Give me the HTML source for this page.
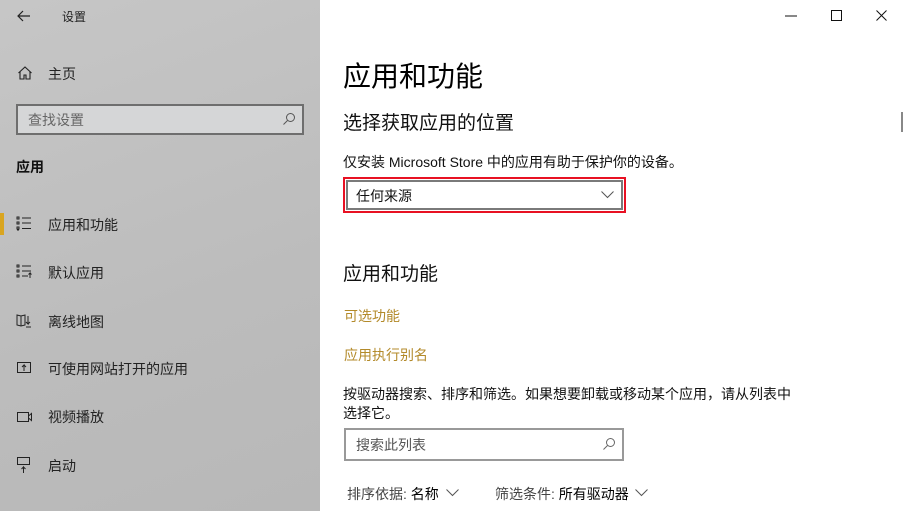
<!DOCTYPE html>
<html><head><meta charset="utf-8"><style>
*{margin:0;padding:0;box-sizing:border-box}
body{width:905px;height:511px;overflow:hidden;font-family:"Liberation Sans","Noto Sans CJK SC",sans-serif;background:#fff;position:relative;color:#000}
.side{position:absolute;left:0;top:0;width:320px;height:511px;background:linear-gradient(160deg,#c6c6c6,#bcbcbc 60%,#b8b8b8)}
.t{position:absolute;white-space:nowrap}
svg{position:absolute}
</style></head><body>
<div class="side">
<svg style="left:16px;top:9px" width="16" height="14" viewBox="0 0 16 14"><path d="M7 2L2 7l5 5M2 7h12" stroke="#222" stroke-width="1.2" fill="none"/></svg>
<div class="t" style="left:62px;top:8px;font-size:12px;color:#222">设置</div>
<svg style="left:17px;top:65px" width="16" height="16" viewBox="0 0 16 16"><path d="M1.5 8L8 2l6.5 6M3 6.5V14h4V10h2v4h4V6.5" stroke="#222" stroke-width="1.1" fill="none"/></svg>
<div class="t" style="left:48px;top:64px;font-size:14px;color:#222">主页</div>
<div style="position:absolute;left:16px;top:104px;width:288px;height:31px;border:2px solid #6e6e6e;background:#d5d6d7"></div>
<div class="t" style="left:28px;top:110px;font-size:14px;color:#666">查找设置</div>
<svg style="left:282px;top:112px" width="14" height="14" viewBox="0 0 14 14"><circle cx="8.5" cy="5.5" r="4" stroke="#555" fill="none"/><path d="M5.5 8.5L1.5 12.5" stroke="#555"/></svg>
<div class="t" style="left:16px;top:157px;font-size:14px;font-weight:bold;color:#111">应用</div>
<div style="position:absolute;left:0;top:213px;width:4px;height:22px;background:#d9a520"></div>
<svg style="left:16px;top:216px" width="18" height="16" viewBox="0 0 18 16"><path d="M1 1h2v2H1zM1 6h2v2H1zM1 11h2v2H1zM1 14h2" stroke="#222" fill="none" stroke-width="1"/><path d="M6 2h9M6 7h9M6 12.5h9" stroke="#222"/></svg>
<div class="t" style="left:48px;top:215px;font-size:14px;color:#222">应用和功能</div>
<svg style="left:16px;top:264px" width="18" height="16" viewBox="0 0 18 16"><path d="M1 1h2v2H1zM1 6h2v2H1zM1 11h2v2H1z" stroke="#222" fill="none"/><path d="M6 2h9M6 7h9M6 12h6M14 14V9l-1.5 1.5M14 9l1.5 1.5" stroke="#222" fill="none"/></svg>
<div class="t" style="left:48px;top:263px;font-size:14px;color:#222">默认应用</div>
<svg style="left:16px;top:313px" width="18" height="16" viewBox="0 0 18 16"><path d="M1 2l4 1 4-1v10l-4 1-4-1zM5 3v10M12 3v8l-2-2M12 11l2-2M10 14h5" stroke="#222" fill="none"/></svg>
<div class="t" style="left:48px;top:312px;font-size:14px;color:#222">离线地图</div>
<svg style="left:16px;top:360px" width="18" height="16" viewBox="0 0 18 16"><path d="M1.5 2.5h13v10h-13zM8 11V5l-2 2M8 5l2 2" stroke="#222" fill="none"/></svg>
<div class="t" style="left:48px;top:359px;font-size:14px;color:#222">可使用网站打开的应用</div>
<svg style="left:16px;top:409px" width="18" height="16" viewBox="0 0 18 16"><path d="M1.5 3.5h11v9h-11zM12.5 7l3-2.5v7l-3-2.5" stroke="#222" fill="none"/></svg>
<div class="t" style="left:48px;top:407px;font-size:14px;color:#222">视频播放</div>
<svg style="left:16px;top:456px" width="18" height="18" viewBox="0 0 18 18"><path d="M1.5 1.5h12v7h-12zM7.5 17V11l-2 2M7.5 11l2 2" stroke="#222" fill="none"/></svg>
<div class="t" style="left:48px;top:456px;font-size:14px;color:#222">启动</div>
</div>
<svg style="left:785px;top:15px" width="12" height="2"><path d="M0 1h12" stroke="#111"/></svg>
<svg style="left:831px;top:10px" width="12" height="12"><rect x=".5" y=".5" width="10" height="10" stroke="#111" fill="none"/></svg>
<svg style="left:876px;top:10px" width="12" height="12"><path d="M.5.5l10 10M10.5.5l-10 10" stroke="#111"/></svg>
<div style="position:absolute;left:901px;top:112px;width:2px;height:20px;background:#888"></div>
<div class="t" style="left:343px;top:55px;font-size:28px;color:#000">应用和功能</div>
<div class="t" style="left:343px;top:108px;font-size:19px;color:#111">选择获取应用的位置</div>
<div class="t" style="left:343px;top:152px;font-size:14px;color:#111">仅安装 Microsoft Store 中的应用有助于保护你的设备。</div>
<div style="position:absolute;left:343px;top:177px;width:283px;height:36px;border:2px solid #e81123"></div>
<div style="position:absolute;left:346px;top:180px;width:277px;height:30px;border:2px solid #7a7a7a;background:#fff"></div>
<div class="t" style="left:356px;top:186px;font-size:14px;color:#111">任何来源</div>
<svg style="left:601px;top:191px" width="13" height="8"><path d="M.5.5l6 6 6-6" stroke="#555" fill="none"/></svg>
<div class="t" style="left:343px;top:259px;font-size:19px;color:#111">应用和功能</div>
<div class="t" style="left:344px;top:306px;font-size:14px;color:#b38a2a">可选功能</div>
<div class="t" style="left:344px;top:345px;font-size:14px;color:#b38a2a">应用执行别名</div>
<div class="t" style="left:343px;top:385px;font-size:14px;color:#111;line-height:19px">按驱动器搜索、排序和筛选。如果想要卸载或移动某个应用，请从列表中<br>选择它。</div>
<div style="position:absolute;left:344px;top:428px;width:280px;height:33px;border:2px solid #999;background:#fff"></div>
<div class="t" style="left:356px;top:435px;font-size:14px;color:#555">搜索此列表</div>
<svg style="left:602px;top:437px" width="14" height="14" viewBox="0 0 14 14"><circle cx="8.5" cy="5.5" r="4" stroke="#666" fill="none"/><path d="M5.5 8.5L1.5 12.5" stroke="#666"/></svg>
<div class="t" style="left:347px;top:484px;font-size:14px;color:#444">排序依据: <span style="color:#000">名称</span></div>
<svg style="left:446px;top:489px" width="13" height="8"><path d="M.5.5l6 6 6-6" stroke="#555" fill="none"/></svg>
<div class="t" style="left:495px;top:484px;font-size:14px;color:#444">筛选条件: <span style="color:#000">所有驱动器</span></div>
<svg style="left:635px;top:489px" width="13" height="8"><path d="M.5.5l6 6 6-6" stroke="#555" fill="none"/></svg>
</body></html>
